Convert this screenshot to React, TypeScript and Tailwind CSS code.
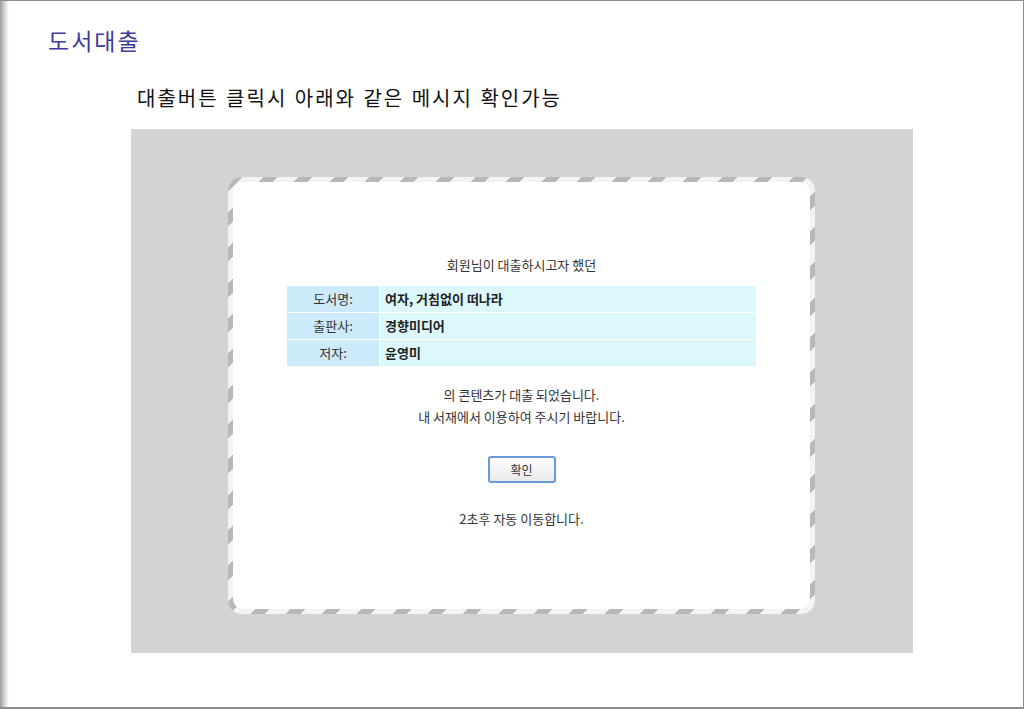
import React from "react";

const rows = [
  { label: "도서명:", value: "여자, 거침없이 떠나라" },
  { label: "출판사:", value: "경향미디어" },
  { label: "저자:", value: "윤영미" },
];

export default function App() {
  const kr = { fontFamily: '"Noto Sans CJK KR", "Noto Sans", sans-serif' };
  return (
    <div
      className="w-[1024px] h-[709px] flex bg-white border-t border-r border-b-2 border-[#8c8c8c] overflow-hidden"
      style={kr}
    >
      <div className="w-[9px] shrink-0 bg-gradient-to-r from-[#9c9c9c] via-[#d6d6d6] to-white" />
      <div className="flex-1 flex flex-col">
        <h1 className="ml-[39px] mt-[25px] text-[23px] leading-[28px] tracking-[2px] text-[#3c3c9e] font-normal">
          도서대출
        </h1>
        <p className="ml-[128px] mt-[32px] text-[20px] leading-[24px] tracking-[2px] [word-spacing:1px] text-[#111]">
          대출버튼 클릭시 아래와 같은 메시지 확인가능
        </p>
        <div className="ml-[122px] mt-[19px] w-[782px] h-[524px] bg-[#d3d3d3] pt-[48px] pl-[97px]">
          <div className="w-[587px] h-[437px] rounded-[14px] p-[5px] bg-[repeating-linear-gradient(135deg,#b8b8b8_0px,#b8b8b8_10px,#f3f3f3_10px,#f3f3f3_25px)]">
            <div className="w-full h-full rounded-[10px] bg-white flex flex-col items-center pt-[73px] text-[#333]">
              <p className="text-[13px] leading-[20px]">회원님이 대출하시고자 했던</p>
              <div className="mt-[11px] w-[469px] flex flex-col gap-[1px]">
                {rows.map((r) => (
                  <div key={r.label} className="flex h-[26px] gap-[1px]">
                    <div className="w-[92px] bg-[#cdeafa] flex items-center justify-center text-[13px] text-[#333]">
                      {r.label}
                    </div>
                    <div className="flex-1 bg-[#dcf8fb] flex items-center pl-[5px] text-[13px] font-bold text-[#222]">
                      {r.value}
                    </div>
                  </div>
                ))}
              </div>
              <p className="mt-[18px] text-[13px] leading-[22px] text-center">
                의 콘텐츠가 대출 되었습니다.
                <br />내 서재에서 이용하여 주시기 바랍니다.
              </p>
              <button className="mt-[28px] w-[68px] h-[27px] rounded-[3px] border-2 border-[#6b9ad8] bg-gradient-to-b from-white to-[#e9e9e9] text-[12px] text-[#333] flex items-center justify-center">
                확인
              </button>
              <p className="mt-[26px] text-[13px] leading-[20px]">2초후 자동 이동합니다.</p>
            </div>
          </div>
        </div>
      </div>
    </div>
  );
}
